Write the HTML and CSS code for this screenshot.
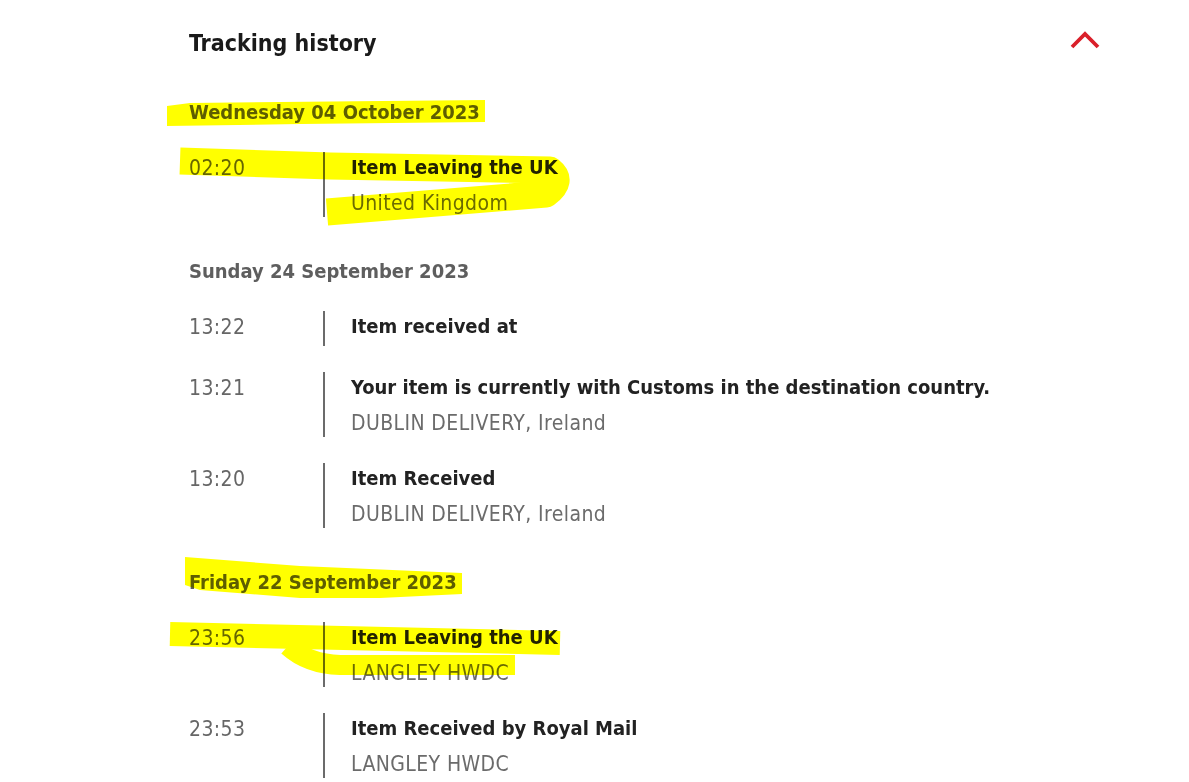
FILE: index.html
```html
<!DOCTYPE html>
<html lang="en">
<head>
<meta charset="utf-8">
<title>Tracking history</title>
<link rel="stylesheet" href="styles.css">
</head>
<body>
<div class="panel">
  <div class="panel-head">
    <h2 class="panel-title">Tracking history</h2>
    <svg class="chevron" width="30" height="18" viewBox="0 0 30 18" aria-hidden="true">
      <path d="M2 16 L15 3 L28 16" fill="none" stroke="#da202a" stroke-width="3.8" stroke-linecap="butt" stroke-linejoin="miter"/>
    </svg>
  </div>

  <section class="day">
    <h3 class="day-date">Wednesday 04 October 2023</h3>
    <div class="event">
      <div class="event-time">02:20</div>
      <div class="event-body">
        <div class="event-title">Item Leaving the UK</div>
        <div class="event-place">United Kingdom</div>
      </div>
    </div>
  </section>

  <section class="day">
    <h3 class="day-date">Sunday 24 September 2023</h3>
    <div class="event">
      <div class="event-time">13:22</div>
      <div class="event-body">
        <div class="event-title">Item received at</div>
      </div>
    </div>
    <div class="event">
      <div class="event-time">13:21</div>
      <div class="event-body">
        <div class="event-title">Your item is currently with Customs in the destination country.</div>
        <div class="event-place">DUBLIN DELIVERY, Ireland</div>
      </div>
    </div>
    <div class="event">
      <div class="event-time">13:20</div>
      <div class="event-body">
        <div class="event-title">Item Received</div>
        <div class="event-place">DUBLIN DELIVERY, Ireland</div>
      </div>
    </div>
  </section>

  <section class="day">
    <h3 class="day-date">Friday 22 September 2023</h3>
    <div class="event">
      <div class="event-time">23:56</div>
      <div class="event-body">
        <div class="event-title">Item Leaving the UK</div>
        <div class="event-place">LANGLEY HWDC</div>
      </div>
    </div>
    <div class="event">
      <div class="event-time">23:53</div>
      <div class="event-body">
        <div class="event-title">Item Received by Royal Mail</div>
        <div class="event-place">LANGLEY HWDC</div>
      </div>
    </div>
  </section>
</div>

<svg class="marker" width="1189" height="782" viewBox="0 0 1189 782" aria-hidden="true">
  <g fill="#ffff00">
    <path d="M167,106 L190,103 L485,100 L485,122 L300,124 L167,126 Z"/>
    <path d="M185,557 L300,566 L462,573 L462,594 L380,598 L300,598 L200,590 L185,585 Z"/>
  </g>
  <g fill="none" stroke="#ffff00" stroke-linejoin="round">
    <path d="M180,161 L330,166 L550,170 Q564,181 546,194 L327,212" stroke-width="27"/>
    <path d="M170,634 L560,643" stroke-width="24"/>
    <path d="M288,646 Q308,664 340,665 L515,665" stroke-width="20"/>
  </g>
</svg>
</body>
</html>
```

FILE: styles.css
```css
html, body {
  margin: 0;
  padding: 0;
  background: #ffffff;
}

body {
  font-family: "DejaVu Sans Condensed", "DejaVu Sans", sans-serif;
  color: #1f1f1f;
  width: 1189px;
  height: 782px;
  overflow: hidden;
  position: relative;
}

.panel {
  margin-left: 189px;
  width: 911px;
  padding-top: 28px;
}

.panel-head {
  display: flex;
  align-items: center;
  justify-content: space-between;
  height: 30px;
}

.panel-title {
  margin: 0;
  font-size: 23px;
  font-weight: 700;
  line-height: 30px;
  color: #1a1a1a;
}

.chevron {
  display: block;
  margin-top: -7px;
}

.day {
  margin-top: 39px;
}

.day + .day {
  margin-top: 39px;
}

.day-date {
  margin: 0 0 25px;
  font-size: 20px;
  font-weight: 700;
  line-height: 30px;
  color: #5e5e5e;
}

.event {
  display: flex;
  min-height: 35px;
}

.event + .event {
  margin-top: 26px;
}

.event-time {
  width: 134px;
  flex: none;
  font-size: 21px;
  letter-spacing: 0.4px;
  line-height: 33px;
  color: #666666;
}

.event-body {
  border-left: 2px solid #6b6b6b;
  padding-left: 26px;
}

.event-title {
  font-size: 20px;
  font-weight: 700;
  line-height: 31px;
  color: #222222;
}

.event-place {
  margin-top: 7px;
  font-size: 21px;
  letter-spacing: 0.4px;
  line-height: 27px;
  color: #6b6b6b;
}

.marker {
  position: absolute;
  left: 0;
  top: 0;
  mix-blend-mode: multiply;
  pointer-events: none;
}
```
